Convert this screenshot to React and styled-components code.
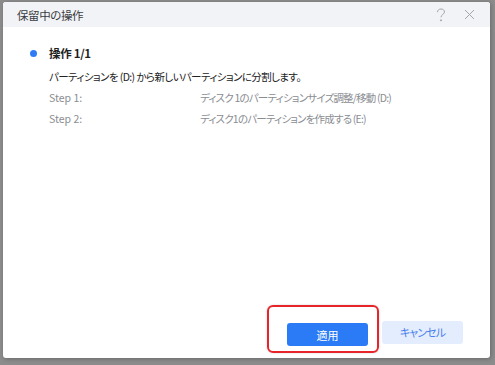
import React from "react";
import styled, { createGlobalStyle } from "styled-components";

const GlobalStyle = createGlobalStyle`
  html, body {
    margin: 0;
    padding: 0;
    background: #8a8a8a;
  }
  body {
    font-family: "Noto Sans CJK JP", "Noto Sans", sans-serif;
    font-feature-settings: "palt";
  }
`;

const Backdrop = styled.div`
  width: 495px;
  height: 365px;
  box-sizing: border-box;
  padding: 2px 5px 7px 3px;
  background: #8c8c8c;
`;

const Dialog = styled.div`
  height: 100%;
  display: flex;
  flex-direction: column;
  background: #fff;
  border-radius: 3px;
  overflow: hidden;
  box-shadow: 1px 1px 4px rgba(0, 0, 0, 0.25);
`;

const Header = styled.div`
  height: 25px;
  flex: none;
  display: flex;
  align-items: center;
  padding: 0 15px 0 14px;
  background: #f2f3f6;
`;

const Title = styled.div`
  flex: 1;
  font-size: 11.5px;
  color: #3a3d42;
  letter-spacing: -0.4px;
`;

const HeaderIcons = styled.div`
  display: flex;
  align-items: center;
  gap: 18px;
  color: #a3a6ab;
`;

const IconButton = styled.span`
  display: flex;
  align-items: center;
  justify-content: center;
  width: 11px;
  height: 14px;
`;

const Body = styled.div`
  flex: 1;
  padding: 19px 0 0 27px;
`;

const OpRow = styled.div`
  display: flex;
  align-items: center;
  height: 14px;
  gap: 12px;
`;

const Dot = styled.span`
  width: 7px;
  height: 7px;
  border-radius: 50%;
  background: #2f7bf5;
`;

const OpTitle = styled.div`
  font-size: 11.5px;
  font-weight: 700;
  color: #1f1f1f;
  letter-spacing: -0.3px;
`;

const Details = styled.div`
  padding-left: 19px;
  margin-top: 9px;
`;

const Summary = styled.div`
  font-size: 10.5px;
  color: #222;
  line-height: 16px;
  letter-spacing: -0.6px;
`;

const StepRow = styled.div`
  display: grid;
  grid-template-columns: 151px 1fr;
  font-size: 10.5px;
  line-height: 16px;
  color: #8a8d92;
  margin-top: 5px;
`;

const StepText = styled.span`
  letter-spacing: -0.8px;
`;

const Footer = styled.div`
  flex: none;
  display: flex;
  justify-content: flex-end;
  gap: 14px;
  padding: 0 27px 12px 0;
`;

const Highlight = styled.div`
  position: relative;
  &::before {
    content: "";
    position: absolute;
    left: -20px;
    top: -16px;
    right: -11px;
    bottom: -7px;
    border: 2px solid #e8242b;
    border-radius: 6px;
    box-shadow: 0 0 2px rgba(0, 0, 0, 0.2);
    pointer-events: none;
  }
`;

const Button = styled.button`
  width: 81px;
  height: 23px;
  border: none;
  border-radius: 3px;
  font-family: inherit;
  font-feature-settings: "palt";
  font-size: 11px;
  letter-spacing: ${(p) => (p.$primary ? "0" : "-0.9px")};
  cursor: pointer;
  background: ${(p) => (p.$primary ? "#2b7bf7" : "#e4edfd")};
  color: ${(p) => (p.$primary ? "#fff" : "#4a80ee")};
`;

export default function App() {
  return (
    <>
      <GlobalStyle />
      <Backdrop>
        <Dialog>
          <Header>
            <Title>保留中の操作</Title>
            <HeaderIcons>
              <IconButton>
                <svg width="10" height="14" viewBox="0 0 10 14" fill="none" stroke="currentColor" strokeWidth="1">
                  <path d="M1.5 4.2 C1.5 2.2 3 1 5 1 C7 1 8.5 2.2 8.5 4 C8.5 6.2 5 6.5 5 9.3" />
                  <circle cx="5" cy="12.3" r="0.6" fill="currentColor" />
                </svg>
              </IconButton>
              <IconButton>
                <svg width="11" height="11" viewBox="0 0 11 11" fill="none" stroke="currentColor" strokeWidth="1">
                  <path d="M1 1 L10 10 M10 1 L1 10" />
                </svg>
              </IconButton>
            </HeaderIcons>
          </Header>
          <Body>
            <OpRow>
              <Dot />
              <OpTitle>操作 1/1</OpTitle>
            </OpRow>
            <Details>
              <Summary>パーティションを (D:) から新しいパーティションに分割します。</Summary>
              <StepRow>
                <span>Step 1:</span>
                <StepText>ディスク 1のパーティションサイズ調整/移動 (D:)</StepText>
              </StepRow>
              <StepRow>
                <span>Step 2:</span>
                <StepText>ディスク1のパーティションを作成する (E:)</StepText>
              </StepRow>
            </Details>
          </Body>
          <Footer>
            <Highlight>
              <Button $primary>適用</Button>
            </Highlight>
            <Button>キャンセル</Button>
          </Footer>
        </Dialog>
      </Backdrop>
    </>
  );
}
